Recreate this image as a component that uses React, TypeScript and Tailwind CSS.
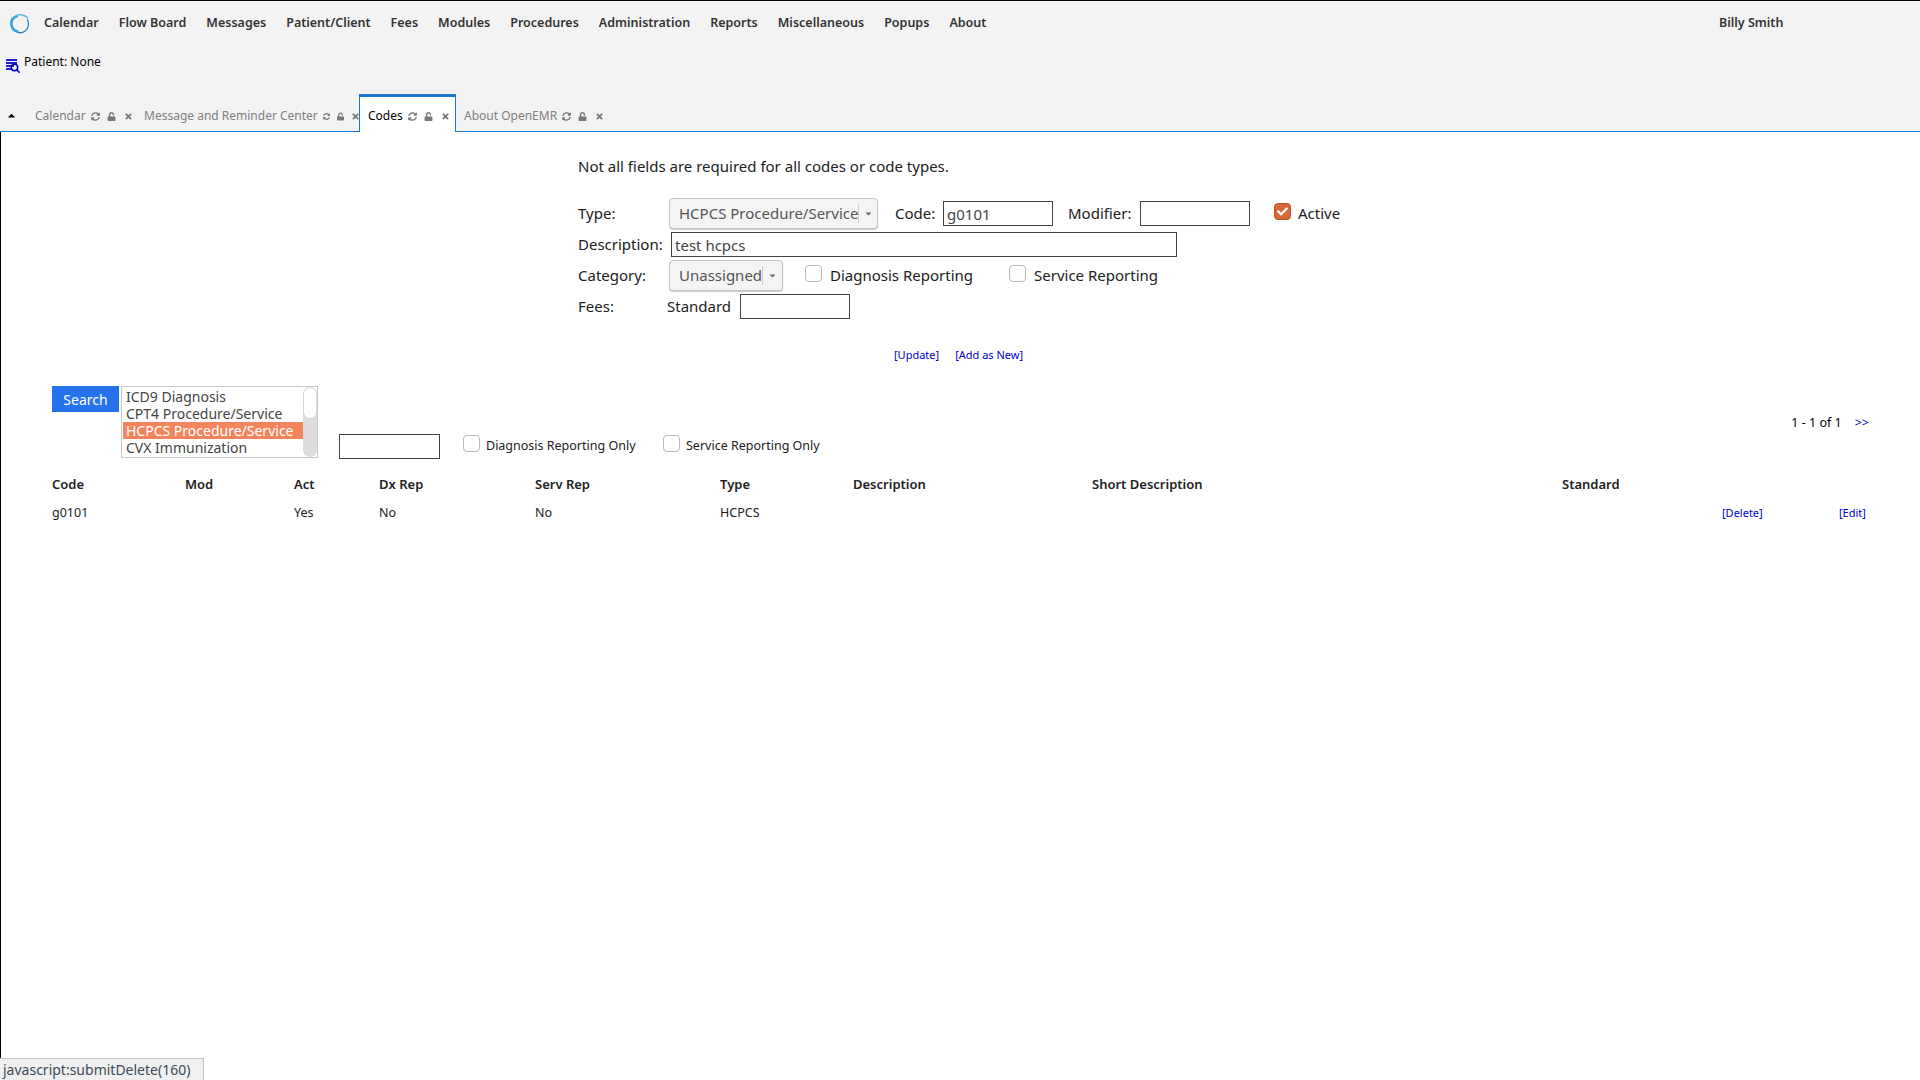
import { FaSyncAlt, FaUnlock, FaTimes, FaCheck, FaCaretUp, FaCaretDown } from "react-icons/fa";

const MENU = [
  "Calendar",
  "Flow Board",
  "Messages",
  "Patient/Client",
  "Fees",
  "Modules",
  "Procedures",
  "Administration",
  "Reports",
  "Miscellaneous",
  "Popups",
  "About",
];

const TABS = [
  { label: "Calendar", width: "w-[109px]", active: false },
  { label: "Message and Reminder Center", width: "w-[223px]", active: false },
  { label: "Codes", width: "w-[97px]", active: true },
  { label: "About OpenEMR", width: "w-[150px]", active: false },
];

const COLUMNS = ["Code", "Mod", "Act", "Dx Rep", "Serv Rep", "Type", "Description", "Short Description", "Standard"];
const ROW = ["g0101", "", "Yes", "No", "No", "HCPCS", "", "", ""];
const GRID = "grid grid-cols-[133px_109px_85px_156px_185px_133px_239px_470px_160px_117px_29px]";

const CODE_TYPES = ["ICD9 Diagnosis", "CPT4 Procedure/Service", "HCPCS Procedure/Service", "CVX Immunization"];

const Logo = () => (
  <svg width="22" height="22" viewBox="0 0 22 22" fill="none" className="shrink-0">
    <path d="M8 3.2C4.2 4.4 2 7.6 2.4 11.4c.4 3.6 2.8 6.4 6 7.2" stroke="#35a2dc" strokeWidth="2.6" strokeLinecap="round" />
    <path d="M7 2.6c4-1.6 9-.8 11.4 2.2" stroke="#5cb8e6" strokeWidth="1.6" strokeLinecap="round" />
    <path d="M18.6 7c1.6 4 .8 8.6-2.4 11-2.4 1.8-5 2.2-7.4 1.4" stroke="#2d7fb8" strokeWidth="1.4" strokeLinecap="round" />
  </svg>
);

const PatientIcon = () => (
  <svg width="14" height="16" viewBox="0 0 14 16" className="shrink-0">
    <rect x="0" y="1" width="11" height="2" fill="#2222cc" />
    <rect x="0" y="4" width="11" height="2" fill="#2222cc" />
    <rect x="0" y="7" width="8" height="2" fill="#2222cc" />
    <rect x="0" y="10" width="6" height="2" fill="#2222cc" />
    <circle cx="8.5" cy="9.5" r="3.2" fill="none" stroke="#0000bb" strokeWidth="1.6" />
    <path d="M11 12l2.6 2.8" stroke="#0000bb" strokeWidth="1.6" />
  </svg>
);

const Checkbox = ({ checked = false, className = "" }: { checked?: boolean; className?: string }) => (
  <span
    className={`flex h-[17px] w-[17px] shrink-0 items-center justify-center rounded-[4px] border ${
      checked ? "border-[#b5532c] bg-[#d9673c]" : "border-[#b8b8b8] bg-white"
    } ${className}`}
  >
    {checked && <FaCheck className="h-[11px] w-[11px] text-white" />}
  </span>
);

const FakeSelect = ({ value, width }: { value: string; width: string }) => (
  <div className={`flex h-[31px] ${width} shrink-0 items-center rounded-[4px] border border-[#c4c4c4] bg-[#f4f4f4] pl-[9px] text-[#555] shadow-[0_1px_1px_#ccc]`}>
    <span className="flex-1 whitespace-nowrap">{value}</span>
    <span className="flex h-[19px] w-[20px] items-center justify-center border-l border-[#cfcfcf]">
      <FaCaretDown className="h-[9px] w-[9px] text-[#666]" />
    </span>
  </div>
);

const TextField = ({ value = "", width }: { value?: string; width: string }) => (
  <input
    readOnly
    value={value}
    className={`h-[25px] ${width} shrink-0 border border-[#444] bg-white px-[3px] text-[#444] outline-none`}
  />
);

export default function App() {
  return (
    <div className="relative flex h-screen flex-col overflow-hidden bg-white font-['Noto_Sans',sans-serif] text-[#212121]">
      {/* Header */}
      <div className="bg-[#f3f3f3] border-t border-black">
        <div className="flex h-[45px] items-center pl-[9px]">
          <Logo />
          <nav className="ml-[13px] flex w-[1675px] gap-[20px] text-[12.5px] font-semibold text-[#333]">
            {MENU.map((item) => (
              <span key={item}>{item}</span>
            ))}
          </nav>
          <span className="text-[12.5px] font-semibold text-[#333]">Billy Smith</span>
        </div>
        <div className="flex h-[39px] items-center pl-[6px] text-[12px] text-black">
          <PatientIcon />
          <span className="-mt-[7px] ml-[4px]">Patient: None</span>
        </div>
        <div className="flex h-[47px] items-end border-b border-[#1976d2]">
          <div className="flex h-[46px] w-[27px] items-center justify-center pl-[-2px] pt-[14px]">
            <FaCaretUp className="mr-[5px] h-[11px] w-[11px] text-black" />
          </div>
          {TABS.map((tab) => (
            <div
              key={tab.label}
              className={`flex h-[38px] ${tab.width} -mb-px shrink-0 items-center gap-[4px] pl-[8px] text-[12px] whitespace-nowrap ${
                tab.active
                  ? "border-x border-t-[3px] border-[#1976d2] bg-white pt-[3px] text-black"
                  : "pt-[6px] text-[#808080]"
              }`}
            >
              <span className="mr-[1px]">{tab.label}</span>
              <FaSyncAlt className="h-[9px] w-[9px] text-[#777]" />
              <FaUnlock className="ml-[3px] h-[9px] w-[9px] text-[#777]" />
              <FaTimes className="ml-[4px] h-[9px] w-[9px] text-[#777]" />
            </div>
          ))}
        </div>
      </div>

      {/* Content */}
      <div className="flex-1 border-l border-black pl-[51px]">
        <div className="ml-[526px] text-[15px]">
          <p className="mt-[23px] h-[22px]">Not all fields are required for all codes or code types.</p>
          <div className="mt-[21px] flex h-[31px] items-center">
            <span className="w-[91px]">Type:</span>
            <FakeSelect value="HCPCS Procedure/Service" width="w-[209px]" />
            <span className="ml-[17px] w-[48px]">Code:</span>
            <TextField value="g0101" width="w-[110px]" />
            <span className="ml-[15px] w-[72px]">Modifier:</span>
            <TextField width="w-[110px]" />
            <Checkbox checked className="mb-[5px] ml-[24px]" />
            <span className="ml-[7px]">Active</span>
          </div>
          <div className="mt-[2px] flex h-[27px] items-center">
            <span className="w-[93px]">Description:</span>
            <TextField value="test hcpcs" width="w-[506px]" />
          </div>
          <div className="mt-[2px] flex h-[31px] items-center">
            <span className="w-[91px]">Category:</span>
            <FakeSelect value="Unassigned" width="w-[114px]" />
            <Checkbox className="mb-[5px] ml-[22px]" />
            <span className="ml-[8px] w-[179px]">Diagnosis Reporting</span>
            <Checkbox className="mb-[5px]" />
            <span className="ml-[8px]">Service Reporting</span>
          </div>
          <div className="mt-[3px] flex h-[25px] items-center">
            <span className="w-[89px]">Fees:</span>
            <span className="w-[73px]">Standard</span>
            <TextField width="w-[110px]" />
          </div>
          <div className="mt-[28px] flex h-[16px] items-center gap-[16px] pl-[316px] text-[11px] text-[#0000cc]">
            <span>[Update]</span>
            <span>[Add as New]</span>
          </div>
        </div>

        {/* Search */}
        <div className="mt-[23px] flex h-[73px] w-[1817px] text-[13px]">
          <div className="flex h-[26px] w-[67px] items-center justify-center bg-[#2672ec] text-[14px] text-white">Search</div>
          <div className="relative ml-[2px] h-[72px] w-[197px] border border-[#c8c8c8] pt-[1px] pl-[1px] text-[14px] text-[#444]">
            {CODE_TYPES.map((type) => (
              <div
                key={type}
                className={`flex h-[17px] w-[180px] items-center px-[3px] whitespace-nowrap ${
                  type.startsWith("HCPCS") ? "bg-[#f4845c] text-white" : ""
                }`}
              >
                {type}
              </div>
            ))}
            <div className="absolute top-0 right-0 h-full w-[14px] rounded-full bg-[#dcdcdc]">
              <div className="h-[32px] w-full rounded-full border border-[#d8d8d8] bg-white" />
            </div>
          </div>
          <div className="ml-[21px] self-end pb-[-1px]">
            <TextField width="w-[101px]" />
          </div>
          <div className="ml-[23px] flex items-end pb-[3px]">
            <Checkbox className="mb-[4px]" />
            <span className="ml-[6px] w-[177px] text-[12.5px]">Diagnosis Reporting Only</span>
            <Checkbox className="mb-[4px]" />
            <span className="ml-[6px] text-[12.5px]">Service Reporting Only</span>
          </div>
          <div className="mt-[28px] ml-auto flex gap-[13px] text-[12.5px]">
            <span className="text-black">1 - 1 of 1</span>
            <span className="text-[#0000cc]">&gt;&gt;</span>
          </div>
        </div>

        {/* Results */}
        <div className={`${GRID} mt-[12px] h-[28px] items-center text-[13px] font-semibold`}>
          {COLUMNS.map((col) => (
            <span key={col}>{col}</span>
          ))}
        </div>
        <div className={`${GRID} h-[28px] items-center text-[12.5px]`}>
          {ROW.map((cell, i) => (
            <span key={i}>{cell}</span>
          ))}
          <span className="text-[11px] text-[#0000cc]">[Delete]</span>
          <span className="text-[11px] text-[#0000cc]">[Edit]</span>
        </div>
      </div>

      {/* Browser status bubble */}
      <div className="absolute bottom-0 left-0 flex h-[22px] w-[204px] items-center border-t border-r border-[#c4c4c4] bg-[#f0f0f0] pl-[3px] text-[14px] text-[#3b4a55]">
        javascript:submitDelete(160)
      </div>
    </div>
  );
}
